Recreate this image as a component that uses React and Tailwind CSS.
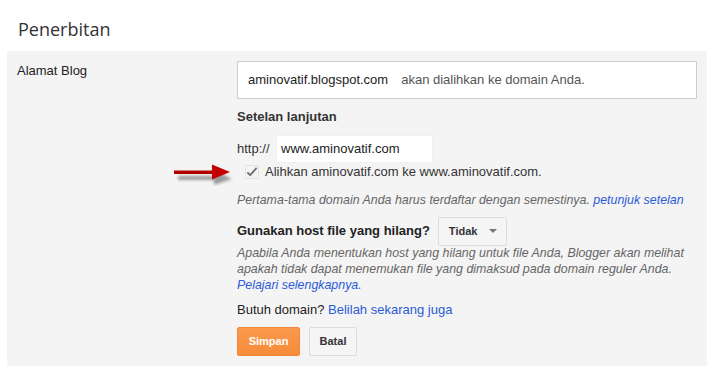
import React from 'react';

const RedArrow = () => (
  <svg width="64" height="24" viewBox="0 0 64 24" className="absolute left-[165px] top-[111px]">
    <defs>
      <filter id="blur" x="-20%" y="-50%" width="140%" height="200%">
        <feGaussianBlur stdDeviation="1.6" />
      </filter>
    </defs>
    {/* shadow */}
    <g filter="url(#blur)" fill="#8a8a8a" opacity="0.85">
      <rect x="6" y="14" width="40" height="4" />
      <polygon points="42,8 60,17 42,23" />
    </g>
    <rect x="2" y="8.5" width="42" height="3.5" fill="#b00000" />
    <polygon points="40,2.5 58,10 40,17.5" fill="#c40000" />
  </svg>
);

const Check = () => (
  <span className="w-[14px] h-[14px] flex items-center justify-center border border-[#e3e3e3] rounded-[1px]">
    <svg width="13" height="12" viewBox="0 0 13 12">
      <path d="M1.5 6.5 L4.5 9.5 L11.5 1.5" fill="none" stroke="#6f6f6f" strokeWidth="2" />
    </svg>
  </span>
);

export default function App() {
  return (
    <div className="w-[716px] h-[372px] bg-white text-[13px] text-[#222]" style={{ fontFamily: '"Liberation Sans", Arial, sans-serif' }}>
      <div className="h-[51px] pl-[18px] pt-[14px]">
        <h1 className="text-[18px] leading-[30px] text-[#333]" style={{ fontFamily: '"Open Sans", sans-serif' }}>Penerbitan</h1>
      </div>

      <div className="relative mx-[7px] w-[700px] bg-[#f4f4f4] pt-[10px] pb-[10px] flex">
        <RedArrow />
        <div className="w-[230px] pl-[10px] pt-[2px] leading-[16px]">Alamat Blog</div>

        <div className="w-[460px] flex flex-col">
          <div className="h-[38px] bg-white border border-[#cdcdcd] flex items-center pl-[10px] gap-[13px]">
            <span className="text-[#222]">aminovatif.blogspot.com</span>
            <span className="text-[#555]">akan dialihkan ke domain Anda.</span>
          </div>

          <div className="mt-[10px] h-4 leading-4 font-bold text-[#333]">Setelan lanjutan</div>

          <div className="mt-[10px] h-[28px] flex items-center">
            <span className="w-[39px] text-[#333]">http://</span>
            <div className="w-[157px] h-[28px] bg-white border border-[#f0f0f0] flex items-center pl-[4px] text-[#222]">www.aminovatif.com</div>
          </div>

          <div className="h-[18px] flex items-center pl-[8px] gap-[6px]">
            <Check />
            <span className="text-[#333]">Alihkan aminovatif.com ke www.aminovatif.com.</span>
          </div>

          <p className="mt-[11px] h-4 leading-4 text-[12.4px] italic text-[#666]">
            Pertama-tama domain Anda harus terdaftar dengan semestinya. <a className="text-[#2a5bd7]">petunjuk setelan</a>
          </p>

          <div className="mt-[9px] h-[28px] flex items-center gap-[8px]">
            <span className="font-bold text-[#222]">Gunakan host file yang hilang?</span>
            <div className="w-[69px] h-[29px] bg-[#f5f5f5] border border-[#dcdcdc] rounded-[2px] flex items-center pl-[10px] gap-[12px]">
              <span className="text-[11px] font-bold text-[#333]">Tidak</span>
              <svg width="8" height="4" viewBox="0 0 8 4"><polygon points="0,0 8,0 4,4" fill="#777" /></svg>
            </div>
          </div>

          <p className="leading-4 text-[12.4px] italic text-[#666]">
            Apabila Anda menentukan host yang hilang untuk file Anda, Blogger akan melihat<br />
            apakah tidak dapat menemukan file yang dimaksud pada domain reguler Anda.<br />
            <a className="text-[#2a5bd7]">Pelajari selengkapnya.</a>
          </p>

          <div className="mt-[9px] h-4 leading-4 text-[#222]">
            Butuh domain? <a className="text-[#2a5bd7]">Belilah sekarang juga</a>
          </div>

          <div className="mt-[9px] flex gap-[9px]">
            <button className="w-[63px] h-[29px] rounded-[2px] border border-[#f0873c] bg-gradient-to-b from-[#fb9a4e] to-[#f68b38] text-white text-[11px] font-bold">Simpan</button>
            <button className="w-[48px] h-[29px] rounded-[2px] border border-[#dcdcdc] bg-[#f5f5f5] text-[#333] text-[11px] font-bold">Batal</button>
          </div>
        </div>
      </div>
    </div>
  );
}
